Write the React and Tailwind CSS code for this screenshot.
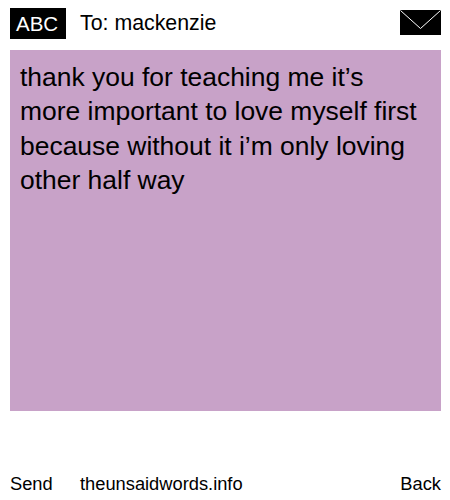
export default function App() {
  return (
    <div className="w-[450px] h-[500px] bg-white text-black flex flex-col px-[10px] pr-[9px] font-['Liberation_Sans',Arial,sans-serif]">
      {/* header */}
      <div className="h-[50px] flex items-start pt-[8px]">
        <div className="w-[56px] h-[31px] bg-black text-white text-[20.5px] leading-[31px] pl-[6px]">ABC</div>
        <div className="ml-[14px] text-[21.33px] leading-[31px]">To: mackenzie</div>
        <svg className="ml-auto mt-[2px]" width="41" height="25" viewBox="0 0 41 25">
          <rect width="41" height="25" fill="#000" />
          <path d="M0.5 0.5 L20.5 18.5 L40.5 0.5" fill="none" stroke="#fff" strokeWidth="1" />
        </svg>
      </div>

      {/* message */}
      <div className="h-[361px] bg-[#c8a2c8] pl-[10px] pr-[20px] pt-[10px] text-[26.45px] leading-[34.4px]">
        thank you for teaching me it’s more important to love myself first because without it i’m only loving other half way
      </div>

      {/* footer */}
      <div className="mt-auto h-[27px] flex items-start text-[18.3px] leading-[21px]">
        <span className="w-[70px]">Send</span>
        <span>theunsaidwords.info</span>
        <span className="ml-auto">Back</span>
      </div>
    </div>
  );
}
